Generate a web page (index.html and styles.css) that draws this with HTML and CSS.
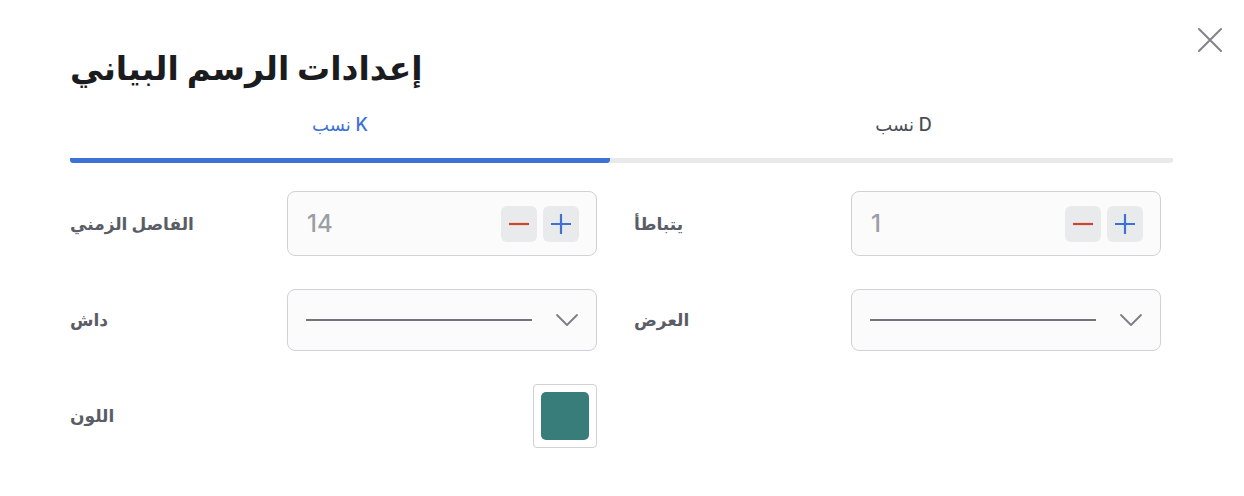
FILE: index.html
```html
<!DOCTYPE html>
<html lang="ar">
<head>
<meta charset="utf-8">
<title>إعدادات الرسم البياني</title>
<link rel="stylesheet" href="styles.css">
</head>
<body>
<div class="dialog">
  <button class="close" aria-label="close">
    <svg width="26" height="26" viewBox="0 0 26 26"><path d="M2 2 L24 24 M24 2 L2 24" stroke="#80838a" stroke-width="2" stroke-linecap="round" fill="none"/></svg>
  </button>
  <h1 class="title">إعدادات الرسم البياني</h1>
  <div class="tabs">
    <div class="tab tab-active"><span class="tab-label">نسب K</span></div>
    <div class="tab"><span class="tab-label">نسب D</span></div>
  </div>
  <div class="form">
    <div class="field">
      <div class="label">الفاصل الزمني</div>
      <div class="control stepper">
        <span class="value">14</span>
        <div class="steps">
          <button class="step"><svg width="22" height="22" viewBox="0 0 22 22"><path d="M1 11 H21" stroke="#c9472e" stroke-width="2.2"/></svg></button>
          <button class="step"><svg width="22" height="22" viewBox="0 0 22 22"><path d="M1 11 H21 M11 1 V21" stroke="#3c72d6" stroke-width="2.2"/></svg></button>
        </div>
      </div>
    </div>
    <div class="field">
      <div class="label">يتباطأ</div>
      <div class="control stepper">
        <span class="value">1</span>
        <div class="steps">
          <button class="step"><svg width="22" height="22" viewBox="0 0 22 22"><path d="M1 11 H21" stroke="#c9472e" stroke-width="2.2"/></svg></button>
          <button class="step"><svg width="22" height="22" viewBox="0 0 22 22"><path d="M1 11 H21 M11 1 V21" stroke="#3c72d6" stroke-width="2.2"/></svg></button>
        </div>
      </div>
    </div>
    <div class="field">
      <div class="label">داش</div>
      <div class="control select">
        <span class="line"></span>
        <svg class="chev" width="24" height="14" viewBox="0 0 24 14"><path d="M2 2 L12 12 L22 2" stroke="#7b7e85" stroke-width="1.8" fill="none" stroke-linecap="round" stroke-linejoin="round"/></svg>
      </div>
    </div>
    <div class="field">
      <div class="label">العرض</div>
      <div class="control select">
        <span class="line"></span>
        <svg class="chev" width="24" height="14" viewBox="0 0 24 14"><path d="M2 2 L12 12 L22 2" stroke="#7b7e85" stroke-width="1.8" fill="none" stroke-linecap="round" stroke-linejoin="round"/></svg>
      </div>
    </div>
    <div class="field">
      <div class="label">اللون</div>
      <div class="control-color">
        <div class="swatch-box"><span class="swatch"></span></div>
      </div>
    </div>
  </div>
</div>
</body>
</html>
```
FILE: styles.css
```css
* { box-sizing: border-box; }
html, body { margin: 0; padding: 0; background: #ffffff; }
body {
  font-family: Inter, "DejaVu Sans", sans-serif;
  color: #1f2126;
}
.dialog {
  position: relative;
  width: 1244px;
  height: 496px;
  padding: 40px 71px 0 70px;
}
.close {
  position: absolute;
  top: 26px;
  right: 20px;
  width: 28px;
  height: 28px;
  padding: 1px;
  border: 0;
  background: none;
  display: flex;
  align-items: center;
  justify-content: center;
}
.title {
  margin: 0;
  font-size: 33px;
  font-weight: 700;
  line-height: 56px;
  color: #1b1c20;
}
.tabs {
  display: grid;
  grid-template-columns: 540px 1fr;
  margin-top: 12px;
}
.tab {
  display: flex;
  justify-content: center;
  height: 55px;
  padding-top: 4px;
  border-bottom: 5px solid #e8e9eb;
  font-size: 18px;
  font-weight: 500;
  color: #4a4d55;
}
.tab-active {
  color: #3c72d6;
  border-bottom-color: #3c72d6;
  border-bottom-left-radius: 3px;
  border-bottom-right-radius: 3px;
}
.tab + .tab { padding-left: 24px; border-radius: 0 0 3px 0; }
.tab-label { line-height: 26px; }
.form {
  display: grid;
  grid-template-columns: 527px 527px;
  column-gap: 37px;
  row-gap: 33px;
  margin-top: 28px;
}
.field {
  display: flex;
  align-items: center;
}
.label {
  width: 217px;
  font-size: 17px;
  font-weight: 700;
  color: #5a5d66;
}
.control {
  width: 310px;
  border: 1px solid #d1d2d6;
  border-radius: 8px;
  background: #fbfbfb;
  display: flex;
  align-items: center;
}
.stepper {
  height: 65px;
  padding: 0 17px 0 19px;
  justify-content: space-between;
}
.value {
  font-size: 24px;
  font-weight: 500;
  color: #9c9ea5;
}
.steps { display: flex; gap: 6px; }
.step {
  width: 36px;
  height: 36px;
  border: 0;
  padding: 0;
  border-radius: 6px;
  background: #e9eaec;
  display: flex;
  align-items: center;
  justify-content: center;
}
.select {
  height: 62px;
  padding: 0 17px 0 18px;
  justify-content: space-between;
}
.line {
  width: 226px;
  height: 2px;
  background: #737479;
}
.control-color { width: 310px; display: flex; justify-content: flex-end; }
.swatch-box {
  width: 64px;
  height: 64px;
  border: 1px solid #d1d2d6;
  border-radius: 4px;
  background: #fff;
  display: flex;
  align-items: center;
  justify-content: center;
}
.swatch {
  width: 48px;
  height: 48px;
  border-radius: 5px;
  background: #387d79;
}
```
